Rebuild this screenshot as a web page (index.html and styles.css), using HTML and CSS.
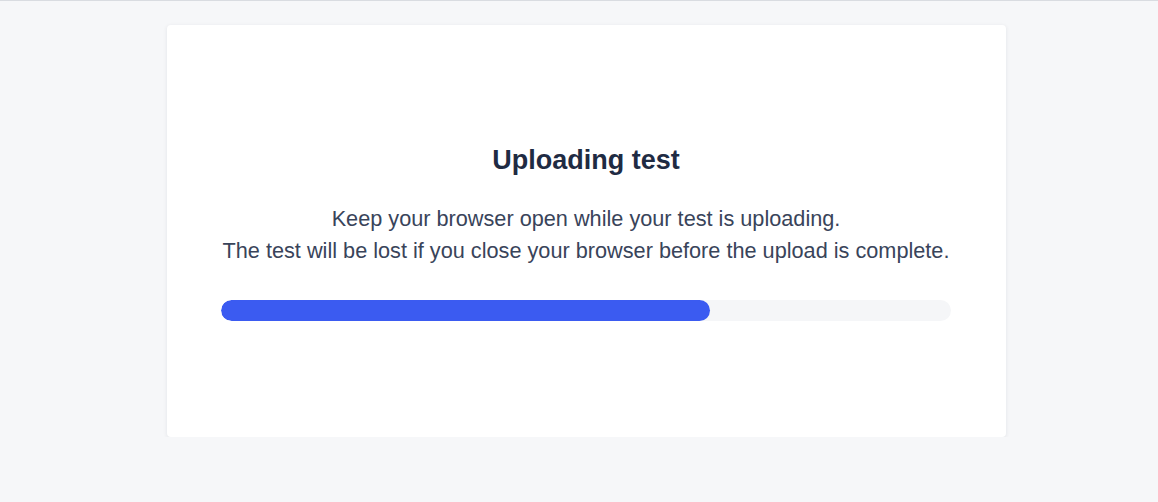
FILE: index.html
```html
<!DOCTYPE html>
<html>
<head>
<meta charset="utf-8">
<link rel="stylesheet" href="styles.css">
</head>
<body>
<div class="topbar"></div>
<main class="page">
  <section class="card">
    <h1 class="title">Uploading test</h1>
    <p class="desc">Keep your browser open while your test is uploading.<br>The test will be lost if you close your browser before the upload is complete.</p>
    <div class="track"><div class="fill" style="width: 67%"></div></div>
  </section>
</main>
</body>
</html>
```
FILE: styles.css
```css
html, body {
  margin: 0;
  padding: 0;
  background: #f6f7f9;
  font-family: "Liberation Sans", Arial, sans-serif;
}
.topbar {
  height: 1px;
  background: #d9dce1;
}
.page {
  display: flex;
  justify-content: center;
  padding: 24px 0 0 15px;
}
.card {
  box-sizing: border-box;
  width: 839px;
  height: 412px;
  background: #ffffff;
  border-radius: 4px;
  box-shadow: 0 1px 4px rgba(20, 30, 50, 0.09);
  padding: 3px 55px 0 54px;
  display: flex;
  flex-direction: column;
  justify-content: center;
  align-items: stretch;
  text-align: center;
}
.title {
  margin: 0;
  font-size: 27px;
  line-height: 32px;
  font-weight: 700;
  color: #1f2b43;
}
.desc {
  margin: 27px 0 0;
  font-size: 21.7px;
  line-height: 32px;
  color: #39445a;
}
.track {
  margin-top: 33px;
  height: 21px;
  border-radius: 11px;
  background: #f5f6f8;
  overflow: hidden;
}
.fill {
  height: 100%;
  border-radius: 11px;
  background: #3b5bf1;
}
```
